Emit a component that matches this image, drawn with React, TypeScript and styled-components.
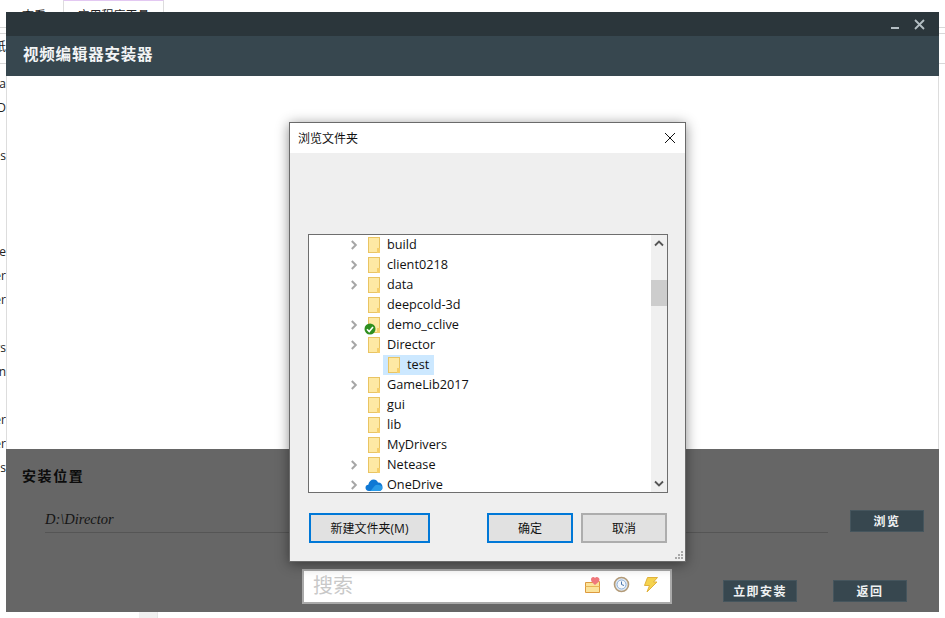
import styled, { createGlobalStyle } from "styled-components";

const UI_FONT = `"Open Sans", "Noto Sans CJK SC", sans-serif`;
const CJK_FONT = `"Noto Sans CJK SC", sans-serif`;

const GlobalStyle = createGlobalStyle`
  html, body {
    margin: 0;
    padding: 0;
    background: #fff;
    overflow: hidden;
  }
  * {
    box-sizing: border-box;
  }
`;

/* page behind the installer, mostly covered */
const Page = styled.div`
  position: relative;
  width: 945px;
  height: 618px;
  overflow: hidden;
  font-family: ${CJK_FONT};
  color: #222;
`;

const TabStrip = styled.div`
  display: flex;
  align-items: flex-start;
  height: 28px;
  padding-left: 22px;
  gap: 17px;
  border-bottom: 1px solid #d8d8d8;
  font-size: 12px;
  line-height: 17px;
`;

const PlainTab = styled.div`
  padding-top: 6px;
`;

const ActiveTab = styled.div`
  width: 101px;
  height: 27px;
  padding-top: 5px;
  text-align: center;
  border: 1px solid #ddd;
  border-top-color: #e3c8f2;
  border-bottom: 0;
`;

const RibbonRow = styled.div<{ $h: number }>`
  height: ${(p) => p.$h}px;
  border-bottom: 1px solid #d8d8d8;
`;

const SideList = styled.div`
  margin-top: 7px;
`;

const ClippedLabel = styled.div`
  display: flex;
  justify-content: flex-end;
  align-items: center;
  width: 6px;
  height: 24px;
  overflow: hidden;
  white-space: nowrap;
  font-family: "Open Sans", ${CJK_FONT};
  font-size: 12px;
`;

const Stub = styled.div`
  width: 19px;
  height: 6px;
  margin: 133px 0 0 139px;
  background: #f0f0f0;
  border-right: 1px solid #e6e6e6;
`;

/* installer window */
const InstallerWindow = styled.div`
  position: absolute;
  left: 6px;
  top: 12px;
  width: 933px;
  height: 600px;
  display: flex;
  flex-direction: column;
`;

const TitleBar = styled.div`
  height: 24px;
  flex: none;
  display: flex;
  justify-content: flex-end;
  align-items: center;
  gap: 13px;
  padding-right: 14px;
  background: #2b363b;
`;

const WindowButton = styled.svg`
  display: block;
  width: 11px;
  height: 11px;
  color: #b4bec3;
`;

const Header = styled.div`
  height: 40px;
  flex: none;
  display: flex;
  align-items: center;
  padding: 0 0 6px 17px;
  background: #37474f;
  color: #f2f4f5;
  font-size: 15.5px;
  font-weight: 700;
  letter-spacing: 0.8px;
`;

const Body = styled.div`
  flex: 1;
  background: #fff;
  border-left: 1px solid #ddd;
  border-right: 1px solid #ddd;
`;

const LocationPanel = styled.div`
  height: 163px;
  flex: none;
  padding: 15px 0 0 16px;
  background: #666;
`;

const PanelHeading = styled.div`
  height: 22px;
  line-height: 22px;
  color: #0c0c0c;
  font-size: 14px;
  font-weight: 700;
  letter-spacing: 1.6px;
`;

const LocationRow = styled.div`
  display: flex;
  margin: 24px 0 48px 23px;
  height: 22px;
`;

const PathField = styled.div`
  width: 783px;
  flex: none;
  height: 23px;
  line-height: 18px;
  border-bottom: 1px solid #555;
  color: #151515;
  font-family: "Liberation Serif", serif;
  font-style: italic;
  font-size: 14.5px;
`;

const ActionRow = styled.div`
  display: flex;
  justify-content: flex-end;
  gap: 36px;
  padding-right: 32px;
`;

const DarkButton = styled.div<{ $offset?: number }>`
  width: 74px;
  height: 22px;
  flex: none;
  margin-left: ${(p) => p.$offset ?? 0}px;
  line-height: 19px;
  text-align: center;
  background: #37474f;
  border: 1px solid #45555d;
  color: #f0f2f3;
  font-size: 12px;
  font-weight: 700;
  letter-spacing: 1.4px;
`;

/* browse for folder dialog */
const Dialog = styled.div`
  position: absolute;
  left: 283px;
  top: 110px;
  width: 397px;
  height: 440px;
  display: flex;
  flex-direction: column;
  background: #efefef;
  border: 1px solid #6a6a6a;
  box-shadow: 0 2px 12px rgba(0, 0, 0, 0.45);
  font-family: ${UI_FONT};
  color: #111;
`;

const DialogTitle = styled.div`
  height: 30px;
  flex: none;
  display: flex;
  align-items: center;
  justify-content: space-between;
  padding: 0 9px 0 8px;
  background: #fff;
  font-size: 12px;
`;

const DialogClose = styled.svg`
  display: block;
  width: 12px;
  height: 12px;
  color: #111;
`;

const TreeBox = styled.div`
  display: flex;
  height: 259px;
  margin: 81px 17px 0 18px;
  background: #fff;
  border: 1px solid #6e6e6e;
`;

const TreeList = styled.div`
  flex: 1;
  height: 257px;
  overflow: hidden;
`;

const TreeRow = styled.div<{ $depth: number }>`
  display: flex;
  align-items: center;
  height: 20px;
  padding-left: ${(p) => (p.$depth ? 74 : 39)}px;
  font-size: 12.7px;
`;

const ChevronSlot = styled.div`
  width: 12px;
  height: 12px;
  margin-right: 7px;
  color: #a6a6a6;
`;

const ChevronIcon = styled.svg`
  display: block;
  width: 12px;
  height: 12px;
`;

const RowLabel = styled.div<{ $selected: boolean }>`
  display: flex;
  align-items: center;
  gap: 6px;
  height: 20px;
  padding-left: ${(p) => (p.$selected ? 4 : 0)}px;
  padding-right: ${(p) => (p.$selected ? 5 : 0)}px;
  background: ${(p) => (p.$selected ? "#cce8ff" : "transparent")};
`;

const RowText = styled.span`
  position: relative;
  top: -1px;
`;

const IconSlot = styled.div`
  position: relative;
  width: 14px;
  height: 18px;
  display: flex;
  align-items: center;
  justify-content: center;
`;

const SyncBadge = styled.svg`
  position: absolute;
  left: -3px;
  bottom: -1px;
  width: 12px;
  height: 12px;
`;

const ScrollBar = styled.div`
  width: 16px;
  flex: none;
  display: flex;
  flex-direction: column;
  background: #f0f0f0;
`;

const ScrollArrow = styled.svg`
  display: block;
  width: 16px;
  height: 17px;
  flex: none;
  color: #555;
`;

const ScrollTrack = styled.div`
  flex: 1;
  padding-top: 28px;
`;

const ScrollThumb = styled.div`
  height: 26px;
  background: #cdcdcd;
`;

const DialogFooter = styled.div`
  display: flex;
  margin: 20px 18px 0 19px;
  gap: 8px;
`;

const SystemButton = styled.div<{ $w: number; $primary?: boolean }>`
  width: ${(p) => p.$w}px;
  height: 30px;
  display: flex;
  align-items: center;
  justify-content: center;
  background: #e1e1e1;
  border: 2px solid ${(p) => (p.$primary ? "#0078d7" : "#adadad")};
  font-size: 12px;
`;

const FooterGap = styled.div`
  flex: 1;
`;

const Grip = styled.svg`
  position: absolute;
  right: 1px;
  bottom: 1px;
  width: 10px;
  height: 10px;
  color: #a8a8a8;
`;

/* search box sitting under the dialog */
const SearchBox = styled.div`
  position: absolute;
  left: 296px;
  top: 557px;
  width: 370px;
  height: 35px;
  display: flex;
  align-items: center;
  padding: 0 11px 4px 9px;
  background: #fff;
  border: 2px solid #aaa;
`;

const SearchHint = styled.div`
  flex: 1;
  color: #c8c8c8;
  font-family: ${CJK_FONT};
  font-size: 20px;
`;

const SearchIcons = styled.div`
  display: flex;
  align-items: center;
  gap: 12px;
`;

const SearchIcon = styled.svg`
  display: block;
  width: 17px;
  height: 17px;
`;

const CloudIcon = styled.svg`
  display: block;
  flex: none;
  width: 18px;
  height: 14px;
  margin: 0 -2px 0 -3px;
`;

const Folder = () => (
  <svg width="14" height="18" viewBox="0 0 14 18">
    <rect x="1.500" y="1.500" width="11" height="15" fill="#fee9a4" stroke="#e9c463" />
    <rect x="10" y="12" width="3" height="5" fill="#f6cf6a" />
  </svg>
);

const Cloud = () => (
  <CloudIcon viewBox="0 0 18 14">
    <path
      d="M4 13C1.800 13 .5 11.500.5 9.800.5 8 1.700 6.900 3.300 6.800 4 3.500 6 1.500 8.700 1.500c2 0 3.500 1 4.300 3 2.600-.2 4.500 1.800 4.500 4.300 0 2.400-1.400 4.200-3.300 4.200z"
      fill="#0f78d4"
    />
    <path d="M5.500 13 10 7.500c2-1.500 7-.5 7.500 2.500 0 1.600-1.400 3-3.300 3z" fill="#2a9be8" />
  </CloudIcon>
);

const Chevron = () => (
  <ChevronIcon viewBox="0 0 12 12">
    <path d="M3.800 2 7.800 6l-4 4" fill="none" stroke="currentColor" strokeWidth="2" />
  </ChevronIcon>
);

type TreeItem = {
  name: string;
  depth?: number;
  expandable?: boolean;
  selected?: boolean;
  synced?: boolean;
  cloud?: boolean;
};

const treeItems: TreeItem[] = [
  { name: "build", expandable: true },
  { name: "client0218", expandable: true },
  { name: "data", expandable: true },
  { name: "deepcold-3d" },
  { name: "demo_cclive", expandable: true, synced: true },
  { name: "Director", expandable: true },
  { name: "test", depth: 1, selected: true },
  { name: "GameLib2017", expandable: true },
  { name: "gui" },
  { name: "lib" },
  { name: "MyDrivers" },
  { name: "Netease", expandable: true },
  { name: "OneDrive", expandable: true, cloud: true },
];

const sideLabels = [
  "Data", "D", "", "Files", "", "", "", "Update", "Folder", "Driver", "",
  "Drivers", "Option", "", "Order", "Filter", "Tools",
];

const App = () => {
  return (
    <Page>
      <GlobalStyle />

      <TabStrip>
        <PlainTab>查看</PlainTab>
        <ActiveTab>应用程序工具</ActiveTab>
      </TabStrip>
      <RibbonRow $h={6} />
      <RibbonRow $h={30}>
        <ClippedLabel>纸</ClippedLabel>
      </RibbonRow>
      <SideList>
        {sideLabels.map((label, i) => (
          <ClippedLabel key={i}>{label}</ClippedLabel>
        ))}
      </SideList>
      <Stub />

      <InstallerWindow>
        <TitleBar>
          <WindowButton viewBox="0 0 11 11">
            <rect x="1" y="8" width="8" height="2" fill="currentColor" />
          </WindowButton>
          <WindowButton viewBox="0 0 11 11">
            <path d="M1 1l9 9M10 1l-9 9" stroke="currentColor" strokeWidth="1.800" />
          </WindowButton>
        </TitleBar>
        <Header>视频编辑器安装器</Header>
        <Body />
        <LocationPanel>
          <PanelHeading>安装位置</PanelHeading>
          <LocationRow>
            <PathField>D:\Director</PathField>
            <DarkButton $offset={22}>浏览</DarkButton>
          </LocationRow>
          <ActionRow>
            <DarkButton>立即安装</DarkButton>
            <DarkButton>返回</DarkButton>
          </ActionRow>
        </LocationPanel>

        <SearchBox>
          <SearchHint>搜索</SearchHint>
          <SearchIcons>
            <SearchIcon viewBox="0 0 17 17">
              <path d="M1.500 6.500h8v-1h6v11h-14z" fill="#fbe39a" stroke="#dd9a3e" />
              <path d="M1.500 10.500h14" stroke="#e8b558" />
              <path
                d="M11 9C8.500 7 7 5.500 7 3.500 7 2 8 1 9.200 1c.8 0 1.400.4 1.800 1 .4-.6 1-1 1.800-1C14 1 15.500 2 15.500 3.500c0 2-2 3.500-4.500 5.500z"
                fill="#f0787c"
              />
            </SearchIcon>
            <SearchIcon viewBox="0 0 17 17">
              <circle cx="8.500" cy="8.500" r="7" fill="#dfe9f5" stroke="#b39b78" strokeWidth="1.600" />
              <circle cx="8.500" cy="8.500" r="4.500" fill="#f5f8fc" stroke="#8fb0d6" />
              <path d="M8.500 5.500v3l2.500 1" fill="none" stroke="#4a76ad" />
            </SearchIcon>
            <SearchIcon viewBox="0 0 17 17">
              <path
                d="M5.500 1.500h10l-4 4.500h3.500L5 16l2.500-6.500H2.500z"
                fill="#f5d34f"
                stroke="#e1b23c"
                strokeLinejoin="round"
              />
            </SearchIcon>
          </SearchIcons>
        </SearchBox>

        <Dialog>
          <DialogTitle>
            浏览文件夹
            <DialogClose viewBox="0 0 12 12">
              <path d="M1 1l10 10M11 1L1 11" stroke="currentColor" strokeWidth="1" />
            </DialogClose>
          </DialogTitle>
          <TreeBox>
            <TreeList>
              {treeItems.map((item) => (
                <TreeRow key={item.name} $depth={item.depth ?? 0}>
                  {!item.depth && (
                    <ChevronSlot>{item.expandable && <Chevron />}</ChevronSlot>
                  )}
                  <RowLabel $selected={!!item.selected}>
                    <IconSlot>
                      {item.cloud ? <Cloud /> : <Folder />}
                      {item.synced && (
                        <SyncBadge viewBox="0 0 12 12">
                          <circle cx="6" cy="6" r="5.500" fill="#2f8f1f" />
                          <path d="M3 6.200 5.200 8.500 9 4" fill="none" stroke="#fff" strokeWidth="1.600" />
                        </SyncBadge>
                      )}
                    </IconSlot>
                    <RowText>{item.name}</RowText>
                  </RowLabel>
                </TreeRow>
              ))}
            </TreeList>
            <ScrollBar>
              <ScrollArrow viewBox="0 0 16 17">
                <path d="M4 10.500 8 6.500l4 4" fill="none" stroke="currentColor" strokeWidth="1.800" />
              </ScrollArrow>
              <ScrollTrack>
                <ScrollThumb />
              </ScrollTrack>
              <ScrollArrow viewBox="0 0 16 17">
                <path d="M4 6.500 8 10.500l4-4" fill="none" stroke="currentColor" strokeWidth="1.800" />
              </ScrollArrow>
            </ScrollBar>
          </TreeBox>
          <DialogFooter>
            <SystemButton $w={121} $primary>新建文件夹(M)</SystemButton>
            <FooterGap />
            <SystemButton $w={86} $primary>确定</SystemButton>
            <SystemButton $w={86}>取消</SystemButton>
          </DialogFooter>
          <Grip viewBox="0 0 10 10">
            <path
              d="M7 1h2v2H7zM4 4h2v2H4zM7 4h2v2H7zM1 7h2v2H1zM4 7h2v2H4zM7 7h2v2H7z"
              fill="currentColor"
            />
          </Grip>
        </Dialog>
      </InstallerWindow>
    </Page>
  );
};

export default App;
